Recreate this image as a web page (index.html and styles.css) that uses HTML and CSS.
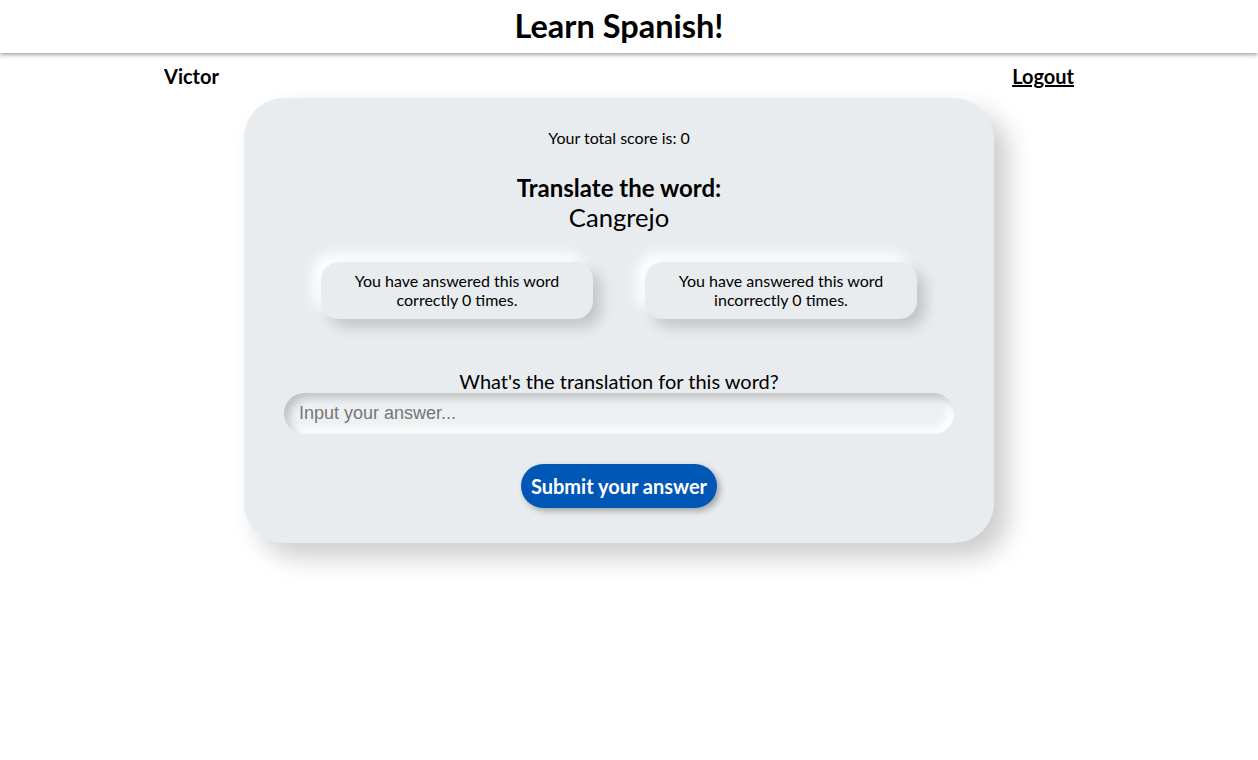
FILE: index.html
```html
<!DOCTYPE html>
<html lang="en">
<head>
<meta charset="utf-8">
<title>Learn Spanish!</title>
<link rel="stylesheet" href="styles.css">
</head>
<body>
<header class="topbar">
  <h1 class="title">Learn Spanish!</h1>
</header>
<main class="page">
  <nav class="nav">
    <span class="user">Victor</span>
    <a class="logout" href="#">Logout</a>
  </nav>
  <section class="card">
    <p class="score">Your total score is: 0</p>
    <h2 class="prompt">Translate the word:</h2>
    <p class="word">Cangrejo</p>
    <div class="stats">
      <div class="stat">You have answered this word correctly 0 times.</div>
      <div class="stat">You have answered this word incorrectly 0 times.</div>
    </div>
    <form class="answer-form">
      <label class="question" for="answer">What's the translation for this word?</label>
      <input class="answer" id="answer" type="text" placeholder="Input your answer...">
      <button class="submit" type="button">Submit your answer</button>
    </form>
  </section>
</main>
</body>
</html>
```
FILE: styles.css
```css
* { box-sizing: border-box; }
html, body { margin: 0; padding: 0; background: #fff; }
body {
  font-family: Lato, "Open Sans", "Liberation Sans", sans-serif;
  color: #000;
  min-height: 760px;
}
.topbar {
  height: 53px;
  background: #fff;
  box-shadow: 0 2px 4px rgba(0, 0, 0, 0.35);
  display: flex;
  align-items: center;
  justify-content: center;
  padding: 0 20px 2px 0;
  position: relative;
  z-index: 1;
}
.title {
  margin: 0;
  font-size: 32.5px;
  font-weight: 700;
  line-height: 40px;
}
.page {
  width: 1238px;
  padding-bottom: 80px;
}
.nav {
  display: flex;
  justify-content: space-between;
  padding: 0 164px;
  margin-top: 11px;
  height: 24px;
  line-height: 24px;
  font-size: 20px;
  font-weight: 700;
}
.logout { color: #000; text-decoration: underline; }
.card {
  width: 750px;
  margin: 10px auto 0;
  background: #e8ecef;
  border-radius: 40px;
  padding: 29.5px 40px 35px;
  box-shadow: 14px 14px 26px rgba(0, 0, 0, 0.2), -10px -10px 20px #fff;
  text-align: center;
}
.score {
  margin: 0;
  font-size: 16px;
  line-height: 19px;
}
.prompt {
  margin: 27.5px 0 0;
  font-size: 24px;
  font-weight: 700;
  line-height: 28px;
}
.word {
  margin: 0;
  font-size: 25.6px;
  line-height: 30px;
}
.stats {
  display: flex;
  justify-content: center;
  gap: 52px;
  margin-top: 30px;
}
.stat {
  width: 272px;
  height: 57px;
  padding: 8.5px 16px;
  border-radius: 18px;
  background: #e8ecef;
  font-size: 16px;
  line-height: 19px;
  box-shadow: 8px 8px 14px rgba(0, 0, 0, 0.17), -8px -8px 14px #fff;
}
.answer-form {
  display: flex;
  flex-direction: column;
  align-items: center;
  margin-top: 50px;
}
.question {
  font-size: 20px;
  line-height: 24px;
}
.answer {
  width: 670px;
  height: 41px;
  border: none;
  outline: none;
  border-radius: 21px;
  background: #eef1f3;
  padding: 0 15px;
  font-family: "Liberation Sans", Arial, sans-serif;
  font-size: 18px;
  color: #333;
  box-shadow: inset 5px 5px 9px rgba(0, 0, 0, 0.2), inset -5px -5px 9px #fff;
}
.answer::placeholder { color: #757575; }
.submit {
  margin-top: 30px;
  height: 44px;
  padding: 0 10px;
  border: none;
  border-radius: 22px;
  background: #0057b5;
  color: #fff;
  font-family: Lato, "Open Sans", sans-serif;
  font-size: 20px;
  font-weight: 700;
  box-shadow: 3px 3px 6px rgba(0, 0, 0, 0.3);
  cursor: pointer;
}
```
